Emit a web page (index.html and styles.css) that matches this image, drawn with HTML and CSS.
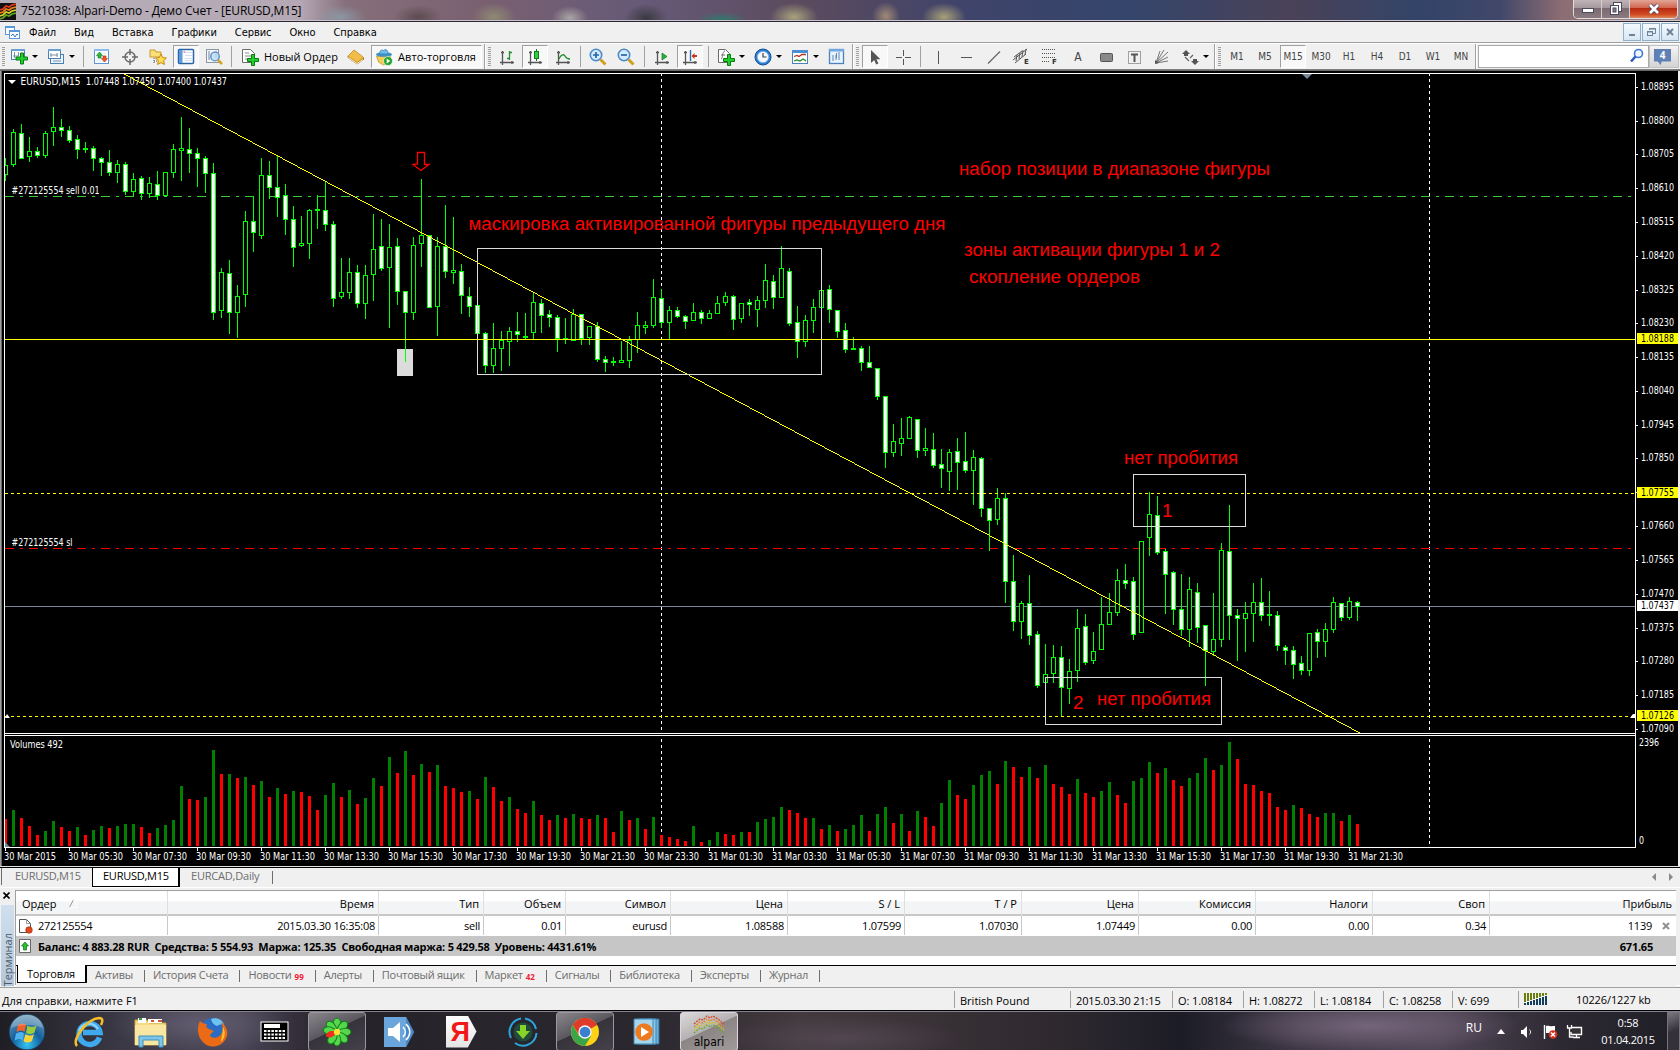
FILE: index.html
```html
<!DOCTYPE html>
<html lang="ru">
<head>
    <meta charset="UTF-8">
    <meta name="viewport" content="width=device-width, initial-scale=1.0">
    <title>7521038: Alpari-Demo - Демо Счет - [EURUSD,M15]</title>
    <link rel="stylesheet" href="styles.css">
</head>
<body>
    <header class="titlebar">
        <svg class="app-icon" width="16" height="17" viewBox="0 0 16 17">
            <rect width="16" height="17" fill="#111"/>
            <g fill="none" stroke-width="1.8">
                <path d="M0 7l3-1 3-3 3 1 3-2 4-1" stroke="#e23a1c"/>
                <path d="M0 10l3-1 3-3 3 1 3-2 4-1" stroke="#e8801c"/>
                <path d="M0 13l3-1 3-3 3 1 3-2 4-1" stroke="#d8d02a"/>
                <path d="M0 16l3-1 3-3 3 1 3-2 4-1" stroke="#5fa52c"/>
            </g>
        </svg>
        <h1 class="title">7521038: Alpari-Demo - Демо Счет - [EURUSD,M15]</h1>
        <div class="window-buttons">
            <button class="wb"><svg width="14" height="12" viewBox="0 0 14 12"><rect x="1.5" y="5.500" width="11" height="4" fill="#fff" stroke="#4a4a5c"/></svg></button>
            <button class="wb"><svg width="14" height="14" viewBox="0 0 14 14"><g fill="#fff" stroke="#4a4a5c"><rect x="4.500" y=".5" width="8" height="9"/><rect x="1.500" y="3.500" width="8" height="9"/><rect x="4" y="6" width="3" height="4" fill="#887b82"/></g></svg></button>
            <button class="wb close"><svg width="14" height="12" viewBox="0 0 14 12"><path d="M3 2l8 8M11 2l-8 8" stroke="#4a4a5c" stroke-width="4.500"/><path d="M3 2l8 8M11 2l-8 8" stroke="#fff" stroke-width="2.600"/></svg></button>
        </div>
    </header>

    <nav class="menubar">
        <svg class="doc-icon" width="15" height="15" viewBox="0 0 15 15">
            <rect x=".5" y="1.500" width="9" height="8" fill="#fff" stroke="#5a96dc"/><rect x="0" y="1" width="10" height="2" fill="#5a96dc"/>
            <rect x="4.500" y="5.500" width="10" height="8" fill="#fff" stroke="#5a96dc"/><rect x="4" y="5" width="11" height="2" fill="#5a96dc"/>
            <path d="M6 11l2-2 2 3 2-3 1 1" fill="none" stroke="#3c78c8"/>
        </svg>
        <span>Файл</span>
        <span>Вид</span>
        <span>Вставка</span>
        <span>Графики</span>
        <span>Сервис</span>
        <span>Окно</span>
        <span>Справка</span>
        <div class="mdi-buttons">
            <i><svg width="12" height="12"><rect x="3" y="8" width="6" height="2" fill="#6f8296"/></svg></i>
            <i><svg width="12" height="12"><g fill="none" stroke="#6f8296"><path d="M4.500 4V2.500h6v5H8"/><path d="M4 3h7"/><rect x="2.500" y="5.500" width="5" height="4"/><path d="M2 6h6"/></g></svg></i>
            <i><svg width="12" height="12"><path d="M3 3l6 6M9 3l-6 6" stroke="#6f8296" stroke-width="2"/></svg></i>
        </div>
    </nav>

    <div class="toolbar">
        <div class="tools first">
            <i class="grip"></i>
            <i class="tool drop"><svg width="18" height="18" viewBox="0 0 18 18"><rect x="1.500" y="1.500" width="13" height="10" fill="#fff" stroke="#4a7fb4"/><rect x="1" y="1" width="14" height="2" fill="#6aa0d4"/><path d="M4.500 4v6M3 8h6M8.500 4v4" stroke="#7a93ab" fill="none"/><path d="M10.500 5h3v4h4v3h-4v4h-3v-4H6V9h4.500z" fill="#1fd02a" stroke="#0b7a14"/></svg></i>
            <i class="tool drop"><svg width="18" height="18" viewBox="0 0 18 18"><rect x="3.500" y="6.500" width="13" height="9" fill="#eaf3fc" stroke="#4a7fb4"/><rect x="1.500" y="1.500" width="12" height="9" fill="#fff" stroke="#4a7fb4"/><rect x="1" y="1" width="13" height="2" fill="#6aa0d4"/><path d="M4 5v4M3 7h8M10 5v4M6 13h8" stroke="#7a93ab"/></svg></i>
            <i class="sep wide"></i>
            <i class="tool"><svg width="18" height="18" viewBox="0 0 18 18"><rect x="1.500" y="1.500" width="14" height="14" fill="#fff" stroke="#5b97d0"/><rect x="1" y="1" width="15" height="2" fill="#8abcf0"/><path d="M3 5h11M3 8h11M3 11h11M3 13h11" stroke="#dce8f4"/><path d="M6.500 4l3 3.500H8V10H5V7.500H3.500z" fill="#36b53c" stroke="#0c7d1c" stroke-width=".6"/><path d="M11.500 14l-3-3.500H10V8h3v2.500h1.500z" fill="#f0552a" stroke="#b3310c" stroke-width=".6"/></svg></i>
            <i class="tool"><svg width="18" height="18" viewBox="0 0 18 18"><circle cx="9" cy="9" r="5" fill="none" stroke="#6a6a6a" stroke-width="1.500"/><path d="M9 1v6M9 11v6M1 9h6M11 9h6" stroke="#6a6a6a" stroke-width="1.500"/></svg></i>
            <i class="tool"><svg width="18" height="18" viewBox="0 0 18 18"><path d="M1 2h5l1 2h5v5H1z" fill="#fbe07a" stroke="#c9962a"/><path d="M5 10v6M5 13h5" stroke="#555" stroke-dasharray="1 1"/><path d="M12 6l1.700 3.500 3.800.5-2.800 2.600.7 3.900-3.400-1.900-3.400 1.900.7-3.900L6.500 10l3.800-.5z" fill="#fddc50" stroke="#c48a14"/></svg></i>
            <i class="tool pressed"><svg width="18" height="18" viewBox="0 0 18 18"><rect x="1.500" y="1.500" width="15" height="14" rx="1" fill="#fff" stroke="#2c64a8" stroke-width="1.500"/><rect x="2" y="2" width="3.500" height="13" fill="#5c9bdc"/><path d="M8 4.500h7M8 7.500h7M8 10.500h7M8 12.500h7" stroke="#cfe0f2"/><path d="M6.500 4h1.500" stroke="#e33"/></svg></i>
            <i class="tool"><svg width="18" height="18" viewBox="0 0 18 18"><rect x="1.500" y="1.500" width="12" height="13" fill="#f3f6f9" stroke="#8b97a5"/><path d="M4 3v9M6.500 5v6M11 3v7" stroke="#7388a0"/><circle cx="10" cy="8.500" r="4.300" fill="#bcdcf6" fill-opacity=".8" stroke="#5d90c2" stroke-width="1.300"/><path d="M13 12l4 4" stroke="#d6a228" stroke-width="2.500"/></svg></i>
            <i class="sep"></i>
            <i class="tool new-order"><svg width="18" height="18" viewBox="0 0 18 18"><path d="M1.500 1.500h8l4 4v9h-12z" fill="#fff" stroke="#6b6b6b"/><path d="M4 5h4M4 8h6M4 11h4" stroke="#888"/><path d="M10.500 6.500h3v4h4v3h-4v4h-3v-4H6.500v-3h4z" fill="#1fd02a" stroke="#0b7a14"/></svg><b>Новый Ордер</b></i>
            <i class="tool"><svg width="18" height="18" viewBox="0 0 18 18"><path d="M7 2l9.500 7.500v2L10 16 1 9.500V8z" fill="#c88a1c" stroke="#8a5a10" stroke-width=".7"/><path d="M7 2l9.500 7.500L10 14 1 8z" fill="#f0bd48"/><path d="M1.500 9.500L10 15.500l6-4" fill="none" stroke="#fff3c8"/></svg></i>
            <i class="tool pressed auto"><svg width="18" height="18" viewBox="0 0 18 18"><path d="M1.500 8h14l-2 6-5 3-5-3z" fill="#f6cf52" stroke="#c7962c" stroke-width=".8"/><ellipse cx="9" cy="6.500" rx="8" ry="2.300" fill="#3f93c6"/><path d="M4.500 6C5 1.500 7 1.500 8.500 2.500 11 .5 13 2 13 6z" fill="#6fbde6" stroke="#2f7dae" stroke-width=".7"/><circle cx="13" cy="13" r="4.500" fill="#24a62e" stroke="#fff" stroke-width=".6"/><path d="M11.700 10.500l3.600 2.500-3.600 2.500z" fill="#fff"/></svg><b>Авто-торговля</b></i>
        </div>
        <div class="tools second">
            <i class="grip"></i>
            <i class="tool"><svg width="18" height="18" viewBox="0 0 18 18"><path d="M4.500 3v14M2 14.500h14M3 4.500h3M14 13v3" stroke="#555" fill="none" stroke-width="1.300"/><path d="M11.500 3v9M11.500 4.500H14M9 10.500h2.500" stroke="#1c8f2a" stroke-width="1.300"/></svg></i>
            <i class="tool pressed"><svg width="18" height="18" viewBox="0 0 18 18"><path d="M4.500 3v14M2 14.500h14M3 4.500h3M14 13v3" stroke="#555" fill="none" stroke-width="1.300"/><path d="M10.500 1v12" stroke="#0d7d1c"/><rect x="8.500" y="3.500" width="4" height="7" fill="#2fce44" stroke="#0d7d1c"/></svg></i>
            <i class="tool"><svg width="18" height="18" viewBox="0 0 18 18"><path d="M4.500 3v14M2 14.500h14M3 4.500h3M14 13v3" stroke="#555" fill="none" stroke-width="1.300"/><path d="M5 11c2-5 5-5 6-3s3 3 5 3" stroke="#1c8f2a" fill="none" stroke-width="1.300"/></svg></i>
            <i class="sep"></i>
            <i class="tool"><svg width="18" height="18" viewBox="0 0 18 18"><circle cx="7" cy="7" r="5.700" fill="#d5eafb" stroke="#4a8bc8" stroke-width="1.600"/><path d="M7 4v6M4 7h6" stroke="#2566a8" stroke-width="1.700"/><path d="M11.500 11.500l5 5" stroke="#d0a020" stroke-width="3"/></svg></i>
            <i class="tool"><svg width="18" height="18" viewBox="0 0 18 18"><circle cx="7" cy="7" r="5.700" fill="#d5eafb" stroke="#4a8bc8" stroke-width="1.600"/><path d="M4 7h6" stroke="#2566a8" stroke-width="1.700"/><path d="M11.500 11.500l5 5" stroke="#d0a020" stroke-width="3"/></svg></i>
            <i class="sep wide"></i>
            <i class="tool"><svg width="18" height="18" viewBox="0 0 18 18"><path d="M4.500 3v14M2 14.500h14M3 4.500h3M14 13v3" stroke="#555" fill="none" stroke-width="1.300"/><path d="M9 5l5 3.500L9 12z" fill="#2bb13a" stroke="#0d7d1c" stroke-width=".7"/></svg></i>
            <i class="tool pressed"><svg width="18" height="18" viewBox="0 0 18 18"><path d="M4.500 3v14M2 14.500h14M3 4.500h3M14 13v3" stroke="#555" fill="none" stroke-width="1.300"/><path d="M9.500 2v11" stroke="#2a6fae" stroke-width="1.400"/><path d="M10.500 8l3-3v2H16v2h-2.500v2z" fill="#c8341c"/></svg></i>
            <i class="sep wide"></i>
            <i class="tool drop"><svg width="18" height="18" viewBox="0 0 18 18"><path d="M1.500 1.500h7l4 4v9h-11z" fill="#fff" stroke="#6b6b6b"/><path d="M8 3c-3 0-2 8-4 8M4 7h4" stroke="#777" fill="none"/><path d="M10.500 6.500h3v4h4v3h-4v4h-3v-4H6.500v-3h4z" fill="#1fd02a" stroke="#0b7a14"/></svg></i>
            <i class="tool drop"><svg width="18" height="18" viewBox="0 0 18 18"><circle cx="9" cy="9" r="8" fill="#2d7fd6" stroke="#174f95"/><circle cx="9" cy="9" r="5.600" fill="#f2f8fe" stroke="#8cb8e4" stroke-width=".6"/><path d="M9 5v4h3.500" stroke="#444" fill="none" stroke-width="1.200"/></svg></i>
            <i class="tool drop"><svg width="18" height="18" viewBox="0 0 18 18"><rect x="1.500" y="2.500" width="15" height="13" fill="#fff" stroke="#4a82c0"/><rect x="1" y="2" width="16" height="3" fill="#4a8ed4"/><path d="M3 8.500l3-1 2 1 3-2h4" fill="none" stroke="#b0341c" stroke-width="1.300"/><path d="M3 13l3-1 3 1 3-2 3 2" fill="none" stroke="#1c8f2a" stroke-width="1.300"/></svg></i>
            <i class="tool"><svg width="18" height="18" viewBox="0 0 18 18"><rect x="1.500" y="1.500" width="14" height="14" fill="#eaf3fb" stroke="#4a82c0" stroke-width="1.300"/><rect x="1" y="1" width="15" height="2.500" fill="#6fa8e0"/><path d="M5 7v6M8.500 5v5M8 7v5M11 4v8" stroke="#5b86b4"/></svg></i>
        </div>
        <div class="tools third">
            <i class="grip"></i>
            <i class="tool pressed"><svg width="18" height="18" viewBox="0 0 18 18"><path d="M5 2v13l3.200-3 2 4.500 2.200-1-2-4.300h4z" fill="#555"/></svg></i>
            <i class="tool"><svg width="18" height="18" viewBox="0 0 18 18"><path d="M9.500 2v6M9.500 11v6M2 9.500h6M11 9.500h6" stroke="#555"/></svg></i>
            <i class="sep"></i>
            <i class="tool"><svg width="18" height="18"><path d="M9.500 3v13" stroke="#555"/></svg></i>
            <i class="tool"><svg width="18" height="18"><path d="M4 9.500h11" stroke="#555"/></svg></i>
            <i class="tool"><svg width="18" height="18"><path d="M3 15.500L15 3.500" stroke="#666" stroke-width="1.200"/></svg></i>
            <i class="tool"><svg width="20" height="20" viewBox="0 0 20 20"><path d="M1 13L15 2M2 10l8-6M3 16l11-9M5 8l-1 6M8 6L7 12M11 3l-1 7M14 2l-1 6" stroke="#555" fill="none"/><text x="12" y="17" class="glyph">E</text></svg></i>
            <i class="tool"><svg width="20" height="20" viewBox="0 0 20 20"><path d="M2 2.500h14M2 6.500h14M2 10.500h14M2 14.500h8" stroke="#555" stroke-dasharray="1 1"/><text x="12" y="17" class="glyph">F</text></svg></i>
            <i class="tool letter">A</i>
            <i class="tool"><svg width="18" height="18"><rect x="3.500" y="5.500" width="12" height="8" rx="1" fill="#8a8a8a" stroke="#555"/></svg></i>
            <i class="tool"><svg width="18" height="18" viewBox="0 0 18 18"><rect x="3.500" y="3.500" width="12" height="12" fill="none" stroke="#555" stroke-dasharray="1 1"/><path d="M6 6.500h7M9.500 6v8" stroke="#555" stroke-width="2"/></svg></i>
            <i class="tool"><svg width="18" height="18" viewBox="0 0 18 18"><path d="M3 15L7 3M3 15L11 2M3 15L15 4M3 15l12-6M3 15l12-2" stroke="#777" fill="none"/><path d="M2 12l4 3-4 1z" fill="#555"/></svg></i>
            <i class="tool drop"><svg width="18" height="18" viewBox="0 0 18 18"><path d="M5 2l4 4H7v2H3V6H1zM14 17l4-4h-2v-2h-4v2h-2z" fill="#555"/><path d="M9 10l3-3M4 9l4 4" stroke="#666" fill="none" stroke-width="1.300"/></svg></i>
        </div>
        <div class="tools periods">
            <i class="grip"></i>
            <i class="tool">M1</i>
            <i class="tool">M5</i>
            <i class="tool pressed">M15</i>
            <i class="tool">M30</i>
            <i class="tool">H1</i>
            <i class="tool">H4</i>
            <i class="tool">D1</i>
            <i class="tool">W1</i>
            <i class="tool">MN</i>
        </div>
        <div class="search"><svg width="16" height="16" viewBox="0 0 16 16"><circle cx="9.500" cy="5.500" r="4" fill="#f0f6ff" stroke="#3b78d8" stroke-width="1.600"/><path d="M6.500 8.500l-4.500 5" stroke="#2a5cc0" stroke-width="2.600"/></svg></div>
        <div class="notices"><span>4</span></div>
    </div>

    <main class="chart">
        <svg id="chart" width="1680" height="796" viewBox="0 70 1680 796"></svg>
    </main>

    <div class="chart-tabs">
        <span>EURUSD,M15</span>
        <span class="active">EURUSD,M15</span>
        <span class="last">EURCAD,Daily</span>
        <svg class="scroll" width="24" height="8"><path d="M4 0v8L0 4z" fill="#8a8a8a"/><path d="M17 0v8l4-4z" fill="#8a8a8a"/></svg>
    </div>

    <section class="terminal">
        <aside class="terminal-side">
            <svg width="7" height="7"><path d="M.5.5l6 6M6.500.5l-6 6" stroke="#000" stroke-width="1.600"/></svg>
            <div class="side-title"><span>Терминал</span></div>
        </aside>
        <div class="terminal-body">
            <div class="row head">
                <span>Ордер <svg width="9" height="9"><path d="M.5 8.500L4.500.5" stroke="#999"/><path d="M4.500.5l4 8h-8" stroke="#fff" fill="none"/></svg></span>
                <span>Время</span><span>Тип</span><span>Объем</span><span>Символ</span><span>Цена</span><span>S / L</span><span>T / P</span><span>Цена</span><span>Комиссия</span><span>Налоги</span><span>Своп</span><span>Прибыль</span>
            </div>
            <div class="row order">
                <span><svg width="14" height="16" viewBox="0 0 14 16"><path d="M.5 1.500h7l4 4v9H.5z" fill="#fff" stroke="#555"/><path d="M7.500 1.500v4h4" fill="none" stroke="#999"/><circle cx="10" cy="12" r="3.300" fill="#e0481c" stroke="#a02a08" stroke-width=".6"/></svg>272125554</span>
                <span>2015.03.30 16:35:08</span><span>sell</span><span>0.01</span><span>eurusd</span><span>1.08588</span><span>1.07599</span><span>1.07030</span><span>1.07449</span><span>0.00</span><span>0.00</span><span>0.34</span>
                <span>1139<svg width="8" height="8"><path d="M1 1l6 6M7 1l-6 6" stroke="#909090" stroke-width="2"/></svg></span>
            </div>
            <div class="balance">
                <svg width="14" height="15" viewBox="0 0 14 15"><path d="M.5.5h11v13H.5z" fill="#fff" stroke="#666"/><path d="M6 3l3.500 4h-2v4h-3V7h-2z" fill="#2bc02f" stroke="#0c6b14" stroke-width=".7"/></svg>
                <b class="summary">Баланс: 4 883.28 RUR&nbsp; Средства: 5 554.93&nbsp; Маржа: 125.35&nbsp; Свободная маржа: 5 429.58&nbsp; Уровень: 4431.61%</b>
                <b class="total">671.65</b>
            </div>
            <div class="terminal-tabs">
                <span class="active">Торговля</span>
                <span>Активы</span>
                <span>История Счета</span>
                <span>Новости<sub>99</sub></span>
                <span>Алерты</span>
                <span>Почтовый ящик</span>
                <span>Маркет<sub>42</sub></span>
                <span>Сигналы</span>
                <span>Библиотека</span>
                <span>Эксперты</span>
                <span>Журнал</span>
            </div>
        </div>
    </section>

    <footer class="statusbar">
        <span class="help">Для справки, нажмите F1</span>
        <span class="w116">British Pound</span>
        <span class="w102">2015.03.30 21:15</span>
        <span class="w71">O: 1.08184</span>
        <span class="w71">H: 1.08272</span>
        <span class="w69">L: 1.08184</span>
        <span class="w69">C: 1.08258</span>
        <span class="w66">V: 699</span>
        <span class="traffic"><svg id="signal" width="24" height="13"></svg><em>10226/1227 kb</em></span>
    </footer>

    <div class="taskbar">
        <div class="task start"><svg width="38" height="38" viewBox="0 0 38 38">
            <defs><radialGradient id="orb" cx=".5" cy=".85" r=".9"><stop offset="0" stop-color="#35c4f4"/><stop offset=".45" stop-color="#14609c"/><stop offset="1" stop-color="#7fa6bd"/></radialGradient></defs>
            <circle cx="19" cy="19" r="18" fill="url(#orb)" stroke="#1a2f44"/>
            <path d="M10 12c3-2 6-2 8 0l-1.500 7c-2-2-5-2-8 0z" fill="#f0622a"/><path d="M19.500 12.500c3 2 6 2 9 0l-2 7c-3 2-6 2-8.500 0z" fill="#9ccc3a"/>
            <path d="M8 20.500c3-2 6-2 8 0l-1.500 7c-2-2-5-2-8 0z" fill="#4fb2ee"/><path d="M17.500 21c3 2 6 2 8.500 0l-2 7c-3 2-6 2-8.500 0z" fill="#fbd13a"/>
            <path d="M3 15C5 6 12 2 19 2s14 4 16 13c-8-4-24-4-32 0z" fill="#fff" opacity=".25"/></svg></div>
        <div class="task"><svg width="32" height="32" viewBox="0 0 32 32"><path d="M26.500 21.500a10.500 10.500 0 1 1 .5-5H10" fill="none" stroke="#3fa9ee" stroke-width="5.500"/><path d="M6 15a10.500 10.500 0 0 1 19-2" fill="none" stroke="#8fd6fa" stroke-width="2"/><path d="M4 30C-2 24 14 3 26 2c4 0 4 3 2 7" fill="none" stroke="#f5bd28" stroke-width="2.600"/></svg></div>
        <div class="task"><svg width="34" height="32" viewBox="0 0 34 32"><path d="M1 4h12l2 3h17v22H1z" fill="#f3da83" stroke="#c9a54a"/><path d="M4 2h8v5H4zM14 3h14v4H14z" fill="#fff"/><path d="M5 3h3" stroke="#2a9a3a" stroke-width="2"/><path d="M17 5h3M24 5h4" stroke="#d6542a" stroke-width="2"/><path d="M1 9h31v20H1z" fill="#f8e6a2"/><path d="M5 31V20h24v11h-4v-7H9v7z" fill="#7cc4e8" stroke="#3e90c0"/></svg></div>
        <div class="task"><svg width="34" height="34" viewBox="0 0 34 34"><circle cx="17" cy="16" r="13" fill="#2a6cc4"/><path d="M15 4c6-2 12 1 13 6-3-2-5 0-7 1-3-1-5-3-6-7z" fill="#6cc2f0"/><path d="M4 6c2 2 4 3 7 3-1 2-1 4 2 5l5 2c-2 2-4 3-4 5 3 3 9 2 11-2 3-4 1-9 0-12 7 5 8 13 4 18-5 8-17 9-23 1C1 20 1 12 4 6z" fill="#ea6a16"/><path d="M27 12c3 5 2 11-2 15 0-3 2-8 2-15z" fill="#fbc42c"/></svg></div>
        <div class="task"><svg width="30" height="22" viewBox="0 0 30 22"><rect x="1" y="1" width="27" height="19" fill="#000" stroke="#fff"/><rect x="4" y="3" width="16" height="4" fill="#fff"/><path d="M4 10h21M4 13.500h21M4 17h21" stroke="#fff" stroke-width="2" stroke-dasharray="2.500 1.200"/></svg></div>
        <div class="task framed"><svg width="34" height="34" viewBox="-17 -17 34 34"><g fill="#57d64a" stroke="#0f8020" stroke-width="1"><path id="petal" d="M0 0C-5-5-5-13 0-14 5-13 5-5 0 0z"/><use href="#petal" transform="rotate(45)"/><use href="#petal" transform="rotate(90)"/><use href="#petal" transform="rotate(135)"/><use href="#petal" transform="rotate(180)"/><use href="#petal" transform="rotate(215)"/><use href="#petal" transform="rotate(315)"/><use href="#petal" transform="rotate(280)"/></g><path d="M0 0C-4-4-4-10 0-12 4-10 4-4 0 0z" transform="rotate(250)" fill="#f0301c"/><circle r="3.200" fill="#fbe03a"/></svg></div>
        <div class="task"><svg width="32" height="32" viewBox="0 0 32 32"><path d="M1 1h22l8 15-8 15H1z" fill="#6aa5dc"/><path d="M23 1l8 15-8 15" fill="#4a87c4"/><path d="M5 12h5l7-6v20l-7-6H5z" fill="#fff"/><path d="M20 11c3 3 3 7 0 10M23 8c5 5 5 11 0 16" fill="none" stroke="#fff" stroke-width="1.600"/></svg></div>
        <div class="task"><div class="ya">Я</div></div>
        <div class="task"><svg width="32" height="32" viewBox="0 0 32 32"><circle cx="16" cy="16" r="9.500" fill="#1f4a3c"/><path d="M13 9h6v6h4l-7 8-7-8h4z" fill="#86d42a"/><path d="M4 22A13.500 13.500 0 0 1 14 2.500M18 2.500A13.500 13.500 0 0 1 29 13M29.500 17A13.500 13.500 0 0 1 8 27" fill="none" stroke="#2aa6de" stroke-width="2"/></svg></div>
        <div class="task framed"><svg width="30" height="30" viewBox="-15 -15 30 30"><circle r="14" fill="#fcd116"/><path d="M0 0L-12.100-7A14 14 0 0 1 12.100-7z" fill="#e03a2c"/><path d="M0-7H12.100A14 14 0 0 0-12.100-7L-6 3z" fill="#e03a2c"/><path d="M-12.100-7A14 14 0 0 0 0 14L6 4-6 4z" fill="#3aa648"/><circle r="6.700" fill="#f2f4f6"/><circle r="5.300" fill="#3a7fd0"/></svg></div>
        <div class="task"><svg width="28" height="28" viewBox="0 0 28 28"><path d="M7 1h19v25H7z" fill="#6fb0d8" stroke="#2f6f9c"/><path d="M4 1h19v25H4z" fill="#8ec8e6" stroke="#3f86b2"/><path d="M1 1h19v25H1z" fill="#a5d6ee" stroke="#3f86b2"/><circle cx="11" cy="14" r="8.800" fill="#ee7a1e"/><path d="M8 9l8 5-8 5z" fill="#fff"/></svg></div>
        <div class="task framed current"><svg width="32" height="20" viewBox="0 0 32 20"><g fill="none" stroke-width="1.300" stroke-dasharray="2 1"><path d="M1 9l6-5 3 1 4-4 3 2 3-2 5 3 6 5" stroke="#d8442a"/><path d="M1 12l6-5 3 1 4-4 3 2 3-2 5 3 6 5" stroke="#e2862a"/><path d="M1 15l6-5 3 1 4-4 3 2 3-2 5 3 6 5" stroke="#d4c42a"/><path d="M1 18l6-5 3 1 4-4 3 2 3-2 5 3 6 5" stroke="#6ea83a"/></g></svg><span>alpari</span></div>
        <div class="tray">
            <span class="lang">RU</span>
            <svg class="up" width="8" height="5"><path d="M4 0l4 5H0z" fill="#fff"/></svg>
            <svg width="14" height="14" viewBox="0 0 14 14"><path d="M1 5h2l4-4v12L3 9H1z" fill="#fff"/><path d="M9.500 4.500c1.500 1.500 1.500 3.500 0 5" fill="none" stroke="#ddd"/></svg>
            <svg class="flag" width="16" height="16" viewBox="0 0 16 16"><path d="M1.500 1v14" stroke="#fff" stroke-width="1.400"/><path d="M3 2c3-1 4 1 7 0h2v7H3z" fill="#fff"/><circle cx="10" cy="10.500" r="4.300" fill="#d8301c"/><path d="M8 8.500l4 4M12 8.500l-4 4" stroke="#fff" stroke-width="1.500"/></svg>
            <svg width="17" height="15" viewBox="0 0 17 15"><path d="M6 3.500h9.500v7H5V8" fill="#333" stroke="#fff" stroke-width="1.400"/><path d="M7 13.500h7M10.500 11v3M1.500 1v3h4V1M3.500 4v9h4" stroke="#fff" fill="none" stroke-width="1.300"/></svg>
            <time class="clock">0:58<br>01.04.2015</time>
            <i class="show-desktop"></i>
        </div>
    </div>

    <script src="chart.js"></script>
</body>
</html>
```
FILE: styles.css
```css
* {
    box-sizing: border-box;
}
body {
    margin: 0;
    width: 1680px;
    height: 1050px;
    overflow: hidden;
    background: #f0f0f0;
    color: #000;
    font-family: "Open Sans", "Noto Sans", sans-serif;
    font-size: 11px;
}
i, em {
    font-style: normal;
}
svg {
    display: block;
    flex: none;
}

/* title bar */
.titlebar {
    display: flex;
    height: 22px;
    border-bottom: 1px solid #2c2733;
    box-shadow: inset 0 -1px #c9c3cb;
    background:
        radial-gradient(ellipse 26px 12px at 340px 17px, #8c96a4, transparent),
        radial-gradient(ellipse 24px 12px at 418px 17px, #5c4c50, transparent),
        radial-gradient(ellipse 22px 14px at 494px 17px, #8f8a72, transparent),
        radial-gradient(ellipse 18px 12px at 570px 18px, #a9a6a4, transparent),
        radial-gradient(ellipse 22px 14px at 646px 18px, #3c3a40, transparent),
        radial-gradient(ellipse 26px 8px at 722px 20px, #2f7a6c, transparent),
        radial-gradient(ellipse 24px 14px at 794px 17px, #a8a27c, transparent),
        radial-gradient(ellipse 14px 14px at 886px 16px, #a08a76, transparent),
        radial-gradient(ellipse 22px 14px at 944px 17px, #a8a078, transparent),
        linear-gradient(90deg, #b4aeb8 0, #b5a8b4 300px, #86707b 345px, #7a6070 480px, #665a78 640px, #5c4b5e 800px, #40446a 960px, #34456c 1130px, #4a4258 1290px, #324468 1420px, #41476a 1500px, #8a6c72 1560px, #a58b90 1680px);
}
.app-icon {
    margin-top: 3px;
}
.title {
    flex: 1;
    margin: 0;
    padding-left: 5px;
    font-size: 12px;
    font-weight: 400;
    line-height: 22px;
    letter-spacing: -0.17px;
}
.window-buttons {
    display: flex;
    width: 105px;
    height: 19px;
    margin-right: 2px;
    border: 1px solid #e3dcde;
    border-top: 0;
    border-radius: 0 0 5px 5px;
    overflow: hidden;
}
.wb {
    display: flex;
    justify-content: center;
    align-items: center;
    width: 28px;
    padding: 0 0 1px;
    border: 0;
    border-right: 1px solid #d8ced1;
    background: linear-gradient(#c0b4b8, #a4979c 45%, #7b6a71 46%, #8a7b80);
}
.wb.close {
    flex: 1;
    border-right: 0;
    background: linear-gradient(#e2a595, #d0634d 45%, #b62a12 46%, #d24a22 80%, #d98a5c);
}

/* menu */
.menubar {
    display: flex;
    align-items: center;
    gap: 18px;
    height: 21px;
    padding-left: 5px;
    border-bottom: 1px solid #a0a0a0;
    font-family: "DejaVu Sans Condensed", "DejaVu Sans", sans-serif;
    font-stretch: condensed;
    letter-spacing: -0.06px;
}
.doc-icon {
    margin-right: -9px;
}
.mdi-buttons {
    display: flex;
    gap: 1px;
    margin-left: auto;
    margin-right: 1px;
}
.mdi-buttons i {
    display: flex;
    justify-content: center;
    align-items: center;
    width: 18px;
    height: 18px;
    border: 1px solid #8fb0cc;
    background: linear-gradient(#f4f9fd, #d6e6f4);
}

/* toolbar */
.toolbar {
    display: flex;
    height: 27px;
    border-top: 1px solid #fff;
    border-bottom: 1px solid #808080;
}
.tools {
    display: flex;
    align-items: center;
    height: 25px;
    border-right: 1px solid #a0a0a0;
    box-shadow: 1px 0 #fff;
}
.first {
    width: 485px;
}
.second {
    width: 368px;
}
.third {
    width: 362px;
}
.periods {
    width: 261px;
}
.grip {
    flex: none;
    width: 3px;
    height: 20px;
    margin: 0 2px 0 3px;
    background: repeating-linear-gradient(#a0a0a0 0 1px, #f0f0f0 1px 2px);
}
.first .grip {
    margin: 0 0 0 2px;
}
.tool {
    display: flex;
    flex: none;
    justify-content: center;
    align-items: center;
    width: 28px;
    height: 24px;
    font-family: "DejaVu Sans Condensed", "DejaVu Sans", sans-serif;
    font-stretch: condensed;
    font-size: 10px;
    color: #444;
}
.pressed {
    width: 26px;
    height: 23px;
    margin: 0 1px;
    border: 1px solid #a0a0a0;
    border-right-color: #fff;
    border-bottom-color: #fff;
    background: #f8f8f8;
}
.drop {
    justify-content: flex-start;
    width: 37px;
    padding-left: 5px;
}
.drop::after {
    content: "";
    margin-left: 4px;
    border: 3px solid transparent;
    border-top: 3px solid #000;
    border-bottom: 0;
}
.letter {
    font-size: 12px;
    color: #444;
}
.glyph {
    font: 700 7px "DejaVu Sans", sans-serif;
    fill: #333;
}
.sep {
    flex: none;
    width: 1px;
    height: 21px;
    margin: 0 3px;
    background: #a0a0a0;
}
.sep.wide {
    margin: 0 3px 0 4px;
}
.first .sep.wide {
    margin: 0 4px;
}
.tool b {
    font-family: "Open Sans", "Noto Sans", sans-serif;
    font-stretch: normal;
    font-weight: 400;
    font-size: 11px;
    color: #000;
    margin-left: 5px;
}
.new-order {
    justify-content: flex-start;
    width: 107px;
    padding-left: 6px;
}
.auto {
    justify-content: flex-start;
    width: 111px;
    padding-left: 3px;
    letter-spacing: 0.06px;
}
.search {
    display: flex;
    justify-content: flex-end;
    align-items: center;
    width: 171px;
    height: 23px;
    margin: 1px 0 0 2px;
    padding-right: 3px;
    border: 1px solid #a9a9a9;
    background: #fff;
}
.search svg {
    margin-top: -2px;
}
.notices {
    display: flex;
    flex: 1;
    justify-content: center;
    margin: 1px 1px 1px 0;
    border: 1px solid #c2c2c2;
    background: linear-gradient(#f4f4f4, #d4d4d4);
}
.notices span {
    width: 17px;
    height: 16px;
    margin: 3px 3px 0 0;
    background: #5f80b4;
    clip-path: polygon(0 0, 100% 0, 100% 78%, 45% 78%, 40% 100%, 22% 78%, 0 78%);
    color: #fff;
    font-weight: 700;
    font-size: 10px;
    line-height: 12px;
    text-align: center;
}

/* chart */
.chart {
    height: 796px;
    background: #000;
}
.chart svg text {
    font-family: "DejaVu Sans Condensed", "DejaVu Sans", sans-serif;
    font-stretch: condensed;
    font-size: 9.8px;
    fill: #fff;
}
.chart svg text.note {
    font-family: "Liberation Sans", Arial, sans-serif;
    font-stretch: normal;
    font-size: 18px;
    fill: #f00;
}
.chart svg text.big {
    font-size: 19px;
}
.chart svg text.dark {
    fill: #000;
}

/* chart tabs */
.chart-tabs {
    display: flex;
    height: 22px;
    padding-left: 1px;
    border-top: 1px solid #e3e3e3;
    border-bottom: 1px solid #fff;
    box-shadow: inset 0 1px #000;
    color: #6d6d6d;
}
.chart-tabs span {
    width: 91px;
    height: 17px;
    margin-top: 1px;
    padding-left: 13px;
    border-left: 1px solid #6d6d6d;
    font-size: 11px;
    line-height: 16px;
    letter-spacing: -0.25px;
}
.chart-tabs .active {
    width: 88px;
    height: 19px;
    padding-left: 10px;
    border: 1px solid #000;
    border-top: 0;
    border-right-width: 2px;
    background: #fff;
    color: #000;
}
.chart-tabs .last {
    width: 93px;
    height: 13px;
    margin-top: 4px;
    padding-left: 11px;
    border-left: 0;
    border-right: 1px solid #6d6d6d;
    line-height: 10px;
    letter-spacing: -0.2px;
}
.scroll {
    margin: 6px 4px 0 auto;
}

/* terminal */
.terminal {
    display: flex;
    height: 98px;
    padding-top: 2px;
    border-bottom: 1px solid #fff;
}
.terminal-side {
    width: 15px;
    padding-top: 2px;
}
.terminal-side svg {
    margin-left: 3px;
}
.side-title {
    display: flex;
    align-items: center;
    width: 13px;
    height: 81px;
    margin: 6px 0 0 1px;
    background: linear-gradient(#cfdfee, #b5c8da);
    color: #4d5a68;
}
.side-title span {
    writing-mode: vertical-rl;
    transform: rotate(180deg);
    margin-top: 29px;
    line-height: 13px;
}
.terminal-body {
    width: 1661px;
    border-top: 1px solid #a0a0a0;
    border-left: 1px solid #a0a0a0;
    background: #fff;
}
.row {
    display: grid;
    grid-template-columns: 152px 211px 105px 82px 105px 117px 117px 117px 117px 117px 117px 117px 1fr;
    letter-spacing: -0.25px;
}
.row span {
    padding-right: 3px;
    border-right: 1px solid #c8c8c8;
    text-align: right;
}
.row span:first-child {
    display: flex;
    align-items: center;
    padding-left: 3px;
    text-align: left;
}
.row span:last-child {
    border-right: 0;
}
.head {
    height: 25px;
    border-bottom: 2px solid #c8c8c8;
    background: linear-gradient(#fff 45%, #f3f4f6 46%);
    line-height: 25px;
    letter-spacing: 0;
}
.head span {
    padding-right: 4px;
    border-color: #dedfe1;
}
.head span:first-child {
    gap: 12px;
    padding-left: 6px;
}
.order {
    height: 19px;
    line-height: 19px;
}
.order span:first-child {
    gap: 5px;
}
.order span:last-child {
    display: flex;
    justify-content: flex-end;
    align-items: center;
    gap: 10px;
    padding-right: 6px;
}
.balance {
    display: flex;
    align-items: center;
    gap: 5px;
    height: 20px;
    margin-top: 1px;
    padding: 0 23px 0 3px;
    background: #c6c6c6;
    letter-spacing: -0.23px;
}
.total {
    margin-left: auto;
}
.terminal-tabs {
    display: flex;
    align-items: center;
    height: 21px;
    margin-top: 9px;
    border-top: 1px solid #000;
    background: #f0f0f0;
    color: #6d6d6d;
    letter-spacing: -0.28px;
}
.terminal-tabs span {
    height: 12px;
    padding: 0 11px 0 8px;
    border-right: 1px solid #6d6d6d;
    line-height: 9px;
    white-space: nowrap;
}
.terminal-tabs .active {
    align-self: flex-start;
    width: 70px;
    height: 18px;
    margin: -1px 0 0 1px;
    padding-left: 9px;
    border: 1px solid #000;
    border-right-width: 2px;
    border-top: 0;
    background: #fff;
    color: #000;
    line-height: 17px;
    letter-spacing: -0.2px;
}
.terminal-tabs sub {
    margin-left: 3px;
    color: #f02030;
    font-size: 8px;
    font-weight: 700;
    line-height: 1;
    letter-spacing: 0;
    vertical-align: -1px;
}

/* status bar */
.statusbar {
    display: flex;
    align-items: center;
    height: 24px;
    margin-top: 1px;
    padding-top: 1px;
    border-top: 1px solid #a0a0a0;
    border-bottom: 1px solid #000;
}
.statusbar > span {
    height: 17px;
    padding-left: 5px;
    border-left: 1px solid #a0a0a0;
    line-height: 19px;
}
.statusbar .help {
    width: 954px;
    padding-left: 2px;
    border-left: 0;
    letter-spacing: 0.05px;
}
.w116 {
    width: 116px;
}
.w102 {
    width: 102px;
    letter-spacing: -0.15px;
}
.w71 {
    width: 71px;
    letter-spacing: -0.1px;
}
.w69 {
    width: 69px;
    letter-spacing: -0.1px;
}
.w66 {
    width: 66px;
}
.traffic {
    display: flex;
    align-items: center;
    gap: 28px;
    letter-spacing: -0.1px;
}

/* taskbar */
.taskbar {
    display: flex;
    align-items: center;
    height: 40px;
    border-top: 1px solid #85808c;
    background:
        radial-gradient(ellipse 90px 30px at 200px 12px, #625c70, transparent),
        radial-gradient(ellipse 120px 22px at 840px 26px, #524650, transparent),
        radial-gradient(ellipse 150px 26px at 1370px 14px, #75647a, transparent),
        linear-gradient(90deg, #1f1e25 0, #3a3844 120px, #4a4556 240px, #26222a 330px, #2a272f 640px, #433a3e 800px, #2e292f 1060px, #1c1c26 1180px, #3f3947 1300px, #4f4656 1440px, #2d2932 1560px, #1f1f26);
}
.task {
    display: flex;
    flex-direction: column;
    justify-content: center;
    align-items: center;
    width: 58px;
    height: 39px;
    margin: 0 2px;
}
.task.start {
    width: 54px;
    padding-right: 4px;
}
.framed {
    border: 1px solid #9b979f;
    border-radius: 3px;
    background: linear-gradient(155deg, #8a868c, #5b575f 45%, #37333b 46%, #45414a);
}
.framed.current {
    border-color: #dad8da;
    background: linear-gradient(155deg, #dcdada, #b5b1b2 45%, #8c8586 46%, #a09a9b);
}
.current span {
    font: 12px/14px "DejaVu Sans Condensed", "DejaVu Sans", sans-serif;
    letter-spacing: 0;
}
.ya {
    width: 31px;
    height: 32px;
    padding-left: 5px;
    background: linear-gradient(#fff, #e4e4e4);
    clip-path: polygon(0 0, 72% 0, 100% 50%, 72% 100%, 0 100%);
    color: #f01818;
    font: 700 27px/32px "Liberation Sans Narrow", "Liberation Sans", Arial, sans-serif;
}
.tray {
    display: flex;
    align-items: center;
    height: 39px;
    margin-left: auto;
    color: #fff;
}
.tray svg {
    margin-right: 9px;
}
.tray svg:nth-of-type(4) {
    margin-right: 8px;
}
.tray .flag {
    margin-right: 7px;
}
.tray .up {
    margin: 0 15px 0 15px;
}
.lang {
    margin-bottom: 8px;
    font-size: 12px;
}
.clock {
    width: 74px;
    margin-bottom: 2px;
    line-height: 17px;
    text-align: center;
    letter-spacing: -0.25px;
}
.show-desktop {
    width: 13px;
    height: 39px;
    margin-left: 2px;
    border: 1px solid #77737c;
    background: linear-gradient(155deg, #7b7880, #34313a 50%);
}
```
FILE: chart.js
```js
const svg = document.getElementById('chart');
const NS = 'http://www.w3.org/2000/svg';

function add(tag, attrs, text, parent = svg) {
    const el = document.createElementNS(NS, tag);
    for (const key in attrs) el.setAttribute(key, attrs[key]);
    if (text !== undefined) el.textContent = text;
    parent.appendChild(el);
    return el;
}

function rect(x, y, width, height, fill) {
    add('rect', { x, y, width, height, fill });
}

function label(x, y, text, width, cls = '') {
    const attrs = { x, y, class: cls };
    if (width) {
        attrs.textLength = width;
        attrs.lengthAdjust = 'spacingAndGlyphs';
    }
    add('text', attrs, text);
}

function line(x1, y1, x2, y2, stroke, dash) {
    const attrs = { x1, y1, x2, y2, stroke, 'shape-rendering': 'crispEdges' };
    if (dash) attrs['stroke-dasharray'] = dash;
    add('line', attrs);
}

// high, body top, body bottom, low, 1 = falling candle
const candles = [
    [158,165,174,180,0],[129,132,164,166,0],[124,133,158,158,1],[137,151,156,161,0],[147,151,155,157,1],
    [131,133,155,157,0],[107,127,131,145,0],[119,127,130,136,1],[126,130,140,142,1],[135,139,149,158,1],
    [142,148,149,152,0],[146,148,158,170,1],[157,158,162,175,1],[150,162,172,175,1],[160,164,172,182,0],
    [162,164,191,194,1],[173,179,191,195,0],[176,178,193,199,1],[177,183,193,197,0],[171,184,195,199,1],
    [172,172,195,195,0],[144,149,172,177,0],[117,148,150,180,0],[128,149,153,172,1],[148,153,158,186,1],
    [156,158,173,192,1],[163,173,312,319,1],[268,272,310,317,0],[260,273,312,333,1],[285,296,312,337,0],
    [211,221,294,306,0],[196,221,232,251,1],[158,175,235,238,0],[161,175,187,198,1],[156,187,197,216,1],
    [184,195,219,234,1],[206,219,247,266,1],[216,243,245,246,0],[209,210,243,258,0],[195,209,210,228,0],
    [182,210,224,230,1],[221,224,298,306,1],[258,292,296,298,0],[258,272,292,298,0],[265,272,303,307,1],
    [265,275,303,318,0],[214,249,274,300,0],[219,246,268,270,1],[224,247,267,327,0],[238,246,291,304,1],
    [291,291,312,361,1],[237,245,312,319,0],[179,235,243,266,0],[235,235,307,307,1],[237,246,306,335,0],
    [205,246,271,277,1],[217,270,272,283,0],[264,271,295,313,1],[287,296,306,316,1],[305,305,333,334,1],
    [332,333,365,372,1],[323,348,365,372,0],[331,340,348,370,0],[327,331,341,365,0],[312,331,334,341,1],
    [313,336,337,339,0],[292,302,332,338,0],[299,303,315,332,1],[310,314,317,326,1],[315,317,338,351,1],
    [318,338,338,343,0],[309,314,340,340,0],[314,314,338,344,1],[326,326,337,344,0],[322,326,359,361,1],
    [356,359,362,371,1],[357,361,362,365,0],[341,360,362,362,0],[336,340,360,367,0],[312,325,339,352,0],
    [321,325,327,333,0],[279,297,325,327,0],[289,298,322,327,1],[306,310,322,338,0],[307,310,316,317,1],
    [315,316,321,328,1],[303,312,320,320,0],[310,312,318,323,1],[310,313,318,318,0],[296,303,313,313,0],
    [292,296,302,305,0],[295,296,319,329,1],[303,303,318,322,0],[299,302,304,315,1],[296,300,309,326,0],
    [264,280,300,307,0],[275,281,297,308,1],[246,268,297,297,0],[268,271,323,325,1],[306,322,341,357,1],
    [315,320,341,346,0],[299,307,320,332,0],[290,290,307,307,0],[285,289,309,322,1],[310,310,331,337,1],
    [323,330,349,352,1],[337,348,349,349,0],[346,348,362,370,1],[346,362,367,367,1],[368,368,396,399,1],
    [396,396,452,467,1],[424,441,452,456,0],[418,438,443,455,0],[416,417,438,438,0],[419,419,450,457,1],
    [428,448,450,455,0],[433,449,465,467,1],[449,464,468,487,1],[449,452,471,490,0],[438,451,462,489,1],
    [432,461,470,472,1],[450,457,470,504,0],[457,458,508,516,1],[508,508,520,550,1],[488,498,519,524,0],
    [493,498,581,602,1],[555,581,621,630,1],[601,603,621,638,0],[575,603,635,644,1],[631,634,685,687,1],
    [644,674,682,682,0],[645,657,673,682,0],[646,657,687,716,1],[659,671,688,703,0],[609,628,670,681,0],
    [614,626,662,664,1],[632,651,660,663,0],[597,624,649,649,0],[593,612,624,624,0],[569,580,612,615,0],
    [564,580,583,588,1],[577,581,634,639,1],[541,541,632,632,0],[492,514,537,555,0],[496,515,552,554,1],
    [549,551,574,613,1],[571,572,609,624,1],[574,609,629,635,1],[577,589,629,646,0],[583,592,627,642,1],
    [625,625,650,685,1],[593,639,651,655,0],[543,550,639,646,0],[505,551,615,639,1],[609,615,618,660,1],
    [602,613,618,651,0],[583,602,613,641,0],[578,602,615,620,1],[591,614,615,625,0],[611,615,645,650,1],
    [645,647,650,664,1],[646,650,664,678,1],[656,663,670,674,1],[633,633,670,675,0],[629,632,641,657,1],
    [623,629,641,656,0],[597,602,629,632,0],[603,603,617,620,1],[597,601,617,619,0],[601,602,606,620,1]
];

// bar heights, negative = red
const volumes = [
    -27,36,-28,-20,-11,15,25,-19,-15,19,-11,16,20,-18,20,22,22,-19,-13,18,21,26,60,-47,-46,49,96,-72,72,-68,
    69,-61,65,-49,58,-52,55,-54,-50,-36,51,63,-49,56,-42,48,68,-60,89,-73,95,-71,82,-74,81,-60,-58,-54,55,-47,
    69,-59,-45,49,-37,-33,45,-31,-26,31,-28,32,-28,-27,31,-28,-14,35,-26,28,-17,29,-11,-9,-7,-5,20,-4,6,14,
    -12,-11,14,-14,24,27,29,39,-36,-33,-28,28,-17,21,-15,17,21,31,-15,32,39,-23,32,-15,35,-29,-20,43,66,-51,
    -47,61,71,75,-62,85,-79,-69,79,-68,81,-62,-59,-52,67,-53,-49,55,64,-51,-43,65,68,84,-73,78,-66,-60,68,73,
    88,-76,81,104,-87,-62,-61,-55,-53,-39,-36,41,-38,-32,-29,33,33,-25,31,-22
];

const step = 8;
const left = 5;
const GREEN = '#00ff00';

rect(0, 70, 1, 796, '#a0a0a0');
rect(1, 70, 1, 796, '#696969');
rect(1678, 70, 2, 796, '#f0f0f0');
rect(0, 70, 1680, 1, '#696969');

// captions lie under the lines
label(20.5, 85, 'EURUSD,M15', 60);
label(86, 85, '1.07448 1.07450 1.07400 1.07437', 141);
label(11.5, 194, '#272125554 sell 0.01', 88);
label(11.5, 546, '#272125554 sl', 61);
label(10, 748, 'Volumes 492', 53);
add('path', { d: 'M8 80h8l-4 4z', fill: '#fff' });

rect(397, 349, 16, 27, '#dcdcdc');

line(661.5, 73, 661.5, 847, '#fff', '3 3');
line(1429.5, 73, 1429.5, 847, '#fff', '3 3');
line(5, 196.5, 1635, 196.5, '#32cd32', '9 6 3 6');
line(5, 548.5, 1635, 548.5, '#ff0000', '9 6 3 6');
line(5, 606.5, 1635, 606.5, '#778899');

const clip = add('clipPath', { id: 'plot' });
add('rect', { x: 5, y: 74, width: 1630, height: 773 }, undefined, clip);
const plot = add('g', { 'clip-path': 'url(#plot)' });
candles.forEach(([high, top, bottom, low, falling], i) => {
    const x = left + i * step;
    add('rect', { x, y: high, width: 1, height: low - high + 1, fill: GREEN }, undefined, plot);
    add('rect', { x: x - 2, y: top, width: 5, height: bottom - top + 1, fill: GREEN }, undefined, plot);
    if (bottom - top > 1) {
        add('rect', { x: x - 1, y: top + 1, width: 3, height: bottom - top - 1, fill: falling ? '#fff' : '#000' }, undefined, plot);
    }
});
volumes.forEach((v, i) => {
    const h = Math.abs(v);
    add('rect', { x: left + i * step - 1, y: 846 - h, width: 3, height: h, fill: v < 0 ? '#ff0000' : '#008000' }, undefined, plot);
});

// lines and boxes drawn by hand
line(5, 339.5, 1635, 339.5, '#ffff00');
line(5, 493.5, 1635, 493.5, '#ffff00', '3 3');
line(5, 716.5, 1635, 716.5, '#ffff00', '3 3');

// trend line, one run of pixels for each row
let trend = '';
for (let y = 74; y < 733; y++) {
    const from = Math.round(124 + (y - 74) * 1.8755);
    const to = Math.round(124 + (y - 73) * 1.8755);
    trend += `M${from} ${y}h${to - from}v1h${from - to}z`;
}
add('path', { d: trend, fill: '#ffff00' });

[[477, 248, 344, 126], [1133, 474, 112, 52], [1045, 677, 176, 47]].forEach(([x, y, w, h]) => {
    add('rect', { x: x + 0.5, y: y + 0.5, width: w, height: h, fill: 'none', stroke: '#dcdcdc' });
});
add('path', { d: 'M417.500 164V152.500h7V164.500h4.500l-8 6-8-6z', fill: 'none', stroke: '#ff0000', 'stroke-width': 1.3 });
add('path', { d: 'M1302 74h10l-5 5z', fill: '#778899' });
add('path', { d: 'M5 842l5 5H5z', fill: '#778899' });
add('path', { d: 'M5 718h5l-3-4zM1630 718h5v-4h-2z', fill: '#fff' });

label(959, 175, 'набор позиции в диапазоне фигуры', 311, 'note');
label(468.5, 230, 'маскировка активированной фигуры предыдущего дня', 477, 'note');
label(964, 256, 'зоны активации фигуры 1 и 2', 256, 'note');
label(969, 283, 'скопление ордеров', 171, 'note');
label(1124, 464, 'нет пробития', 114, 'note');
label(1097, 705, 'нет пробития', 114, 'note');
label(1162, 517, '1', 0, 'note big');
label(1073, 709, '2', 0, 'note big');

// frames
line(4.5, 73, 4.5, 848, '#fff');
line(4, 73.5, 1636, 73.5, '#fff');
line(1635.5, 73, 1635.5, 848, '#fff');
line(4, 733.5, 1636, 733.5, '#fff');
line(4, 735.5, 1636, 735.5, '#fff');
line(4, 847.5, 1636, 847.5, '#fff');
rect(5, 734, 1630, 1, '#000');

// price scale
for (let i = 0; i < 20; i++) {
    const y = Math.round(86.7 + i * 33.8);
    rect(1636, y, 2, 1, '#fff');
    label(1641, y + 3, (1.08895 - i * 0.00095).toFixed(5), 33);
}
[[339, '1.08188', '#ffff00'], [493, '1.07755', '#ffff00'], [606, '1.07437', '#ffffff'], [716, '1.07126', '#ffff00']].forEach(([y, text, fill]) => {
    rect(1637, y - 6, 41, 11, fill);
    label(1641, y + 3, text, 33, 'dark');
});
label(1639, 746, '2396', 20);
label(1639, 844, '0', 5);

// time scale
const times = ['30 Mar 2015', '30 Mar 05:30', '30 Mar 07:30', '30 Mar 09:30', '30 Mar 11:30', '30 Mar 13:30', '30 Mar 15:30',
    '30 Mar 17:30', '30 Mar 19:30', '30 Mar 21:30', '30 Mar 23:30', '31 Mar 01:30', '31 Mar 03:30', '31 Mar 05:30',
    '31 Mar 07:30', '31 Mar 09:30', '31 Mar 11:30', '31 Mar 13:30', '31 Mar 15:30', '31 Mar 17:30', '31 Mar 19:30', '31 Mar 21:30'];
times.forEach((text, i) => {
    rect(left + i * 64, 848, 1, 3, '#fff');
    label(4 + i * 64, 860, text, i ? 55 : 52);
});

// connection bars in the status bar
const signal = document.getElementById('signal');
for (let i = 0; i < 8; i++) {
    const h = 2 + i;
    add('rect', { x: i * 3, y: 0, width: 2, height: 11 - h, fill: '#6b7f10' }, undefined, signal);
    add('rect', { x: i * 3, y: 12 - h, width: 2, height: h, fill: '#123f5c' }, undefined, signal);
}
```
